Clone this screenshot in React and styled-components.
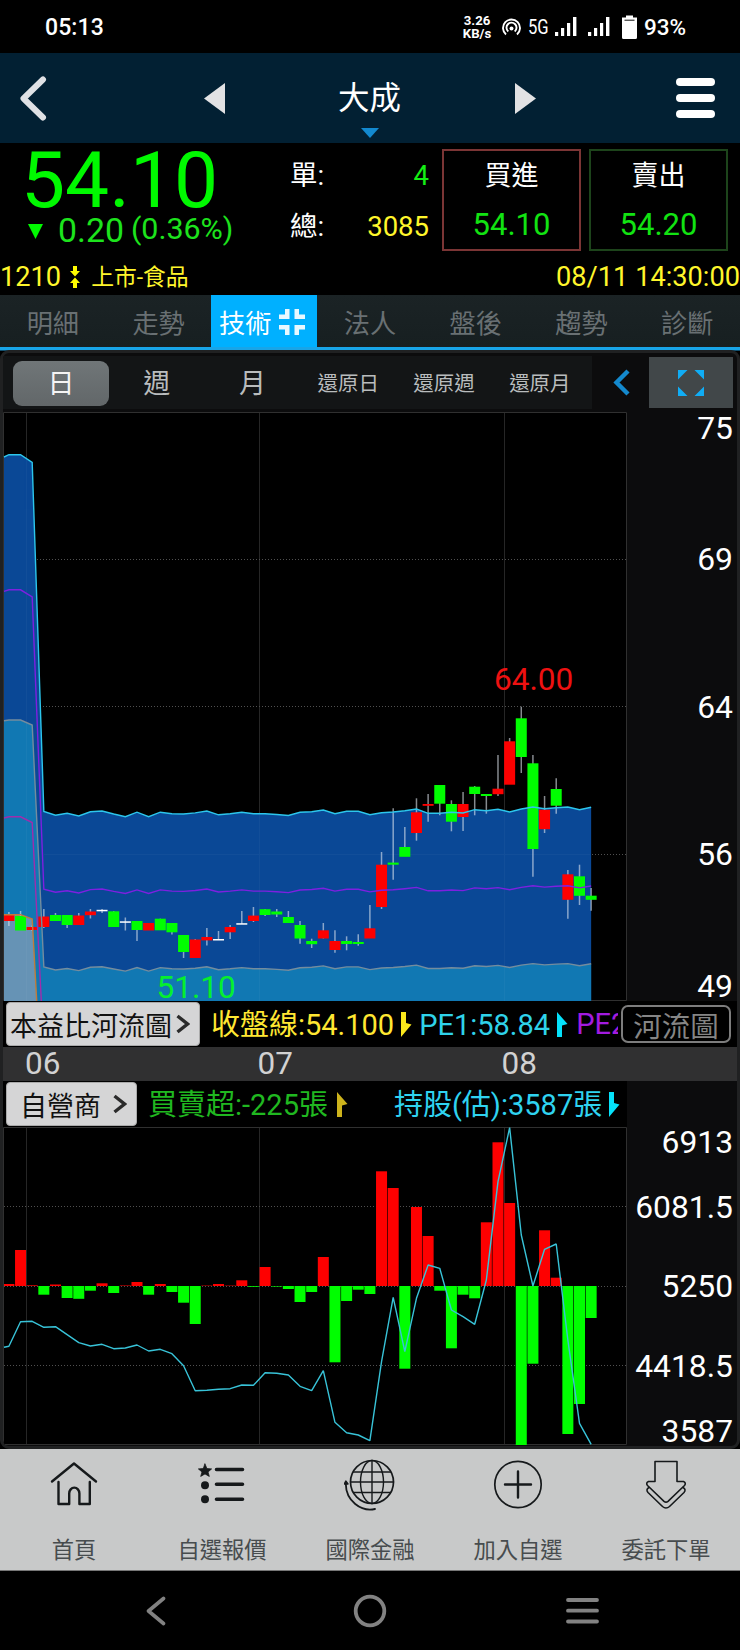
import React from 'react';
import styled, { createGlobalStyle } from 'styled-components';

const Global = createGlobalStyle`
  * { box-sizing: border-box; }
  body { margin: 0; background: #000; }
  svg { display: block; flex: none; }
`;

const Screen = styled.main`
  width: 740px;
  height: 1650px;
  overflow: hidden;
  background: #000;
  color: #fff;
  font-family: Roboto, 'Noto Sans CJK TC', sans-serif;
  display: flex;
  flex-direction: column;
  white-space: nowrap;
`;

/* ---------- status bar ---------- */
const StatusBar = styled.div`
  height: 53px;
  flex: none;
  display: flex;
  align-items: center;
  padding: 1px 54px 0 45px;
  font-size: 23px;
  font-weight: 500;
`;
const Clock = styled.span`
  margin-right: auto;
  letter-spacing: 0.1px;
`;
const Speed = styled.span`
  width: 30px;
  margin-right: 10px;
  font-size: 13.2px;
  line-height: 13px;
  font-weight: 700;
  text-align: center;
`;
const Network = styled.span`
  width: 20px;
  margin: 0 7px;
  font-size: 20px;
  font-weight: 400;
  transform: scaleX(0.83);
  transform-origin: left;
`;
const Percent = styled.span`
  width: 42px;
  margin-left: 7px;
  font-size: 22.5px;
`;

/* ---------- header ---------- */
const Header = styled.header`
  height: 90px;
  flex: none;
  background: #022033;
  display: grid;
  grid-template-columns: 184px 134px 177px 161px 39px;
  align-items: center;
  padding-left: 20px;
`;
const Title = styled.div`
  position: relative;
  font-size: 31.5px;
  line-height: 92px;
  height: 90px;
  width: 63px;
  svg { position: absolute; left: 23px; top: 75px; }
`;
const Burger = styled.div`
  display: grid;
  gap: 8px;
`;
const BurgerBar = styled.i`
  height: 8px;
  border-radius: 4px;
  background: #fff;
`;

/* ---------- quote ---------- */
const Quote = styled.section`
  height: 115px;
  flex: none;
  display: flex;
  padding: 5px 12px 0 0;
`;
const PriceBlock = styled.div`
  width: 290px;
  color: #00f900;
`;
const Price = styled.div`
  padding: 2px 0 0 21px;
  font-size: 78.5px;
  line-height: 60px;
`;
const Change = styled.div`
  display: flex;
  align-items: baseline;
  padding-left: 28px;
  margin-top: 1px;
  line-height: 40px;
  font-size: 33.8px;
  color: #1de31d;
`;
const DownMark = styled.i`
  width: 15px;
  height: 15px;
  margin-right: 15px;
  align-self: center;
  background: #00f900;
  clip-path: polygon(0 0, 100% 0, 50% 100%);
`;
const Ratio = styled.span`
  margin-left: 7px;
  font-size: 30.4px;
  position: relative;
  top: -3px;
`;
const Volumes = styled.dl`
  width: 139px;
  margin: 0 13px 0 0;
  padding-top: 2px;
  display: grid;
  grid-template-rows: 51px 51px;
`;
const Volume = styled.div`
  display: flex;
  justify-content: space-between;
  font-size: 27.5px;
  line-height: 51px;
  dt { color: #fff; }
  dd { margin: 0; color: ${p => p.$tone}; }
`;
const OrderBox = styled.button`
  width: 139px;
  height: 102px;
  margin: 1px 8px 0 0;
  padding: 0;
  flex: none;
  border: 2px solid ${p => p.$edge};
  background: transparent;
  font-family: inherit;
  color: #fff;
  font-size: 27px;
  line-height: 49px;
  text-align: center;
  & + & { margin-right: 0; }
`;
const OrderPrice = styled.div`
  color: #12e312;
  font-size: 31px;
  line-height: 48px;
`;
const InfoLine = styled.div`
  height: 37px;
  flex: none;
  display: flex;
  align-items: center;
  color: #fff62b;
  font-size: 27.2px;
  line-height: 36px;
  svg { margin: 0 11px 0 9px; }
`;
const Sector = styled.span`
  font-size: 22.8px;
  margin-right: auto;
  padding-top: 2px;
`;

/* ---------- tabs ---------- */
const Tabs = styled.nav`
  height: 55px;
  flex: none;
  display: grid;
  grid-template-columns: repeat(7, 1fr);
  background: linear-gradient(#1b2325, #171f21);
  border-bottom: 3px solid #18a5e8;
  box-shadow: 0 1px 0 #12506f;
`;
const Tab = styled.a`
  display: flex;
  align-items: center;
  justify-content: center;
  gap: 8px;
  padding: 1px ${p => (p.$active ? 4 : 0)}px 0 0;
  font-size: 26.2px;
  color: ${p => (p.$active ? '#fff' : '#697073')};
  background: ${p => (p.$active ? '#00b0ff' : 'transparent')};
`;

/* ---------- chart panel ---------- */
const Panel = styled.section`
  height: 1099px;
  flex: none;
  display: flex;
  flex-direction: column;
  border: solid #202122;
  border-width: 3px;
  border-radius: 9px;
  background: #0c0c0d;
  padding: 3px 0 0;
  overflow: hidden;
`;
const Toolbar = styled.div`
  height: 56px;
  flex: none;
  display: flex;
  align-items: flex-start;
`;
const Periods = styled.div`
  width: 589px;
  height: 53px;
  display: flex;
  align-items: center;
  padding: 1px 0 0 10px;
  background: #131516;
`;
const Period = styled.button`
  width: 95.8px;
  height: 45px;
  padding: 2px 0 0;
  border: 0;
  border-radius: 9px;
  background: ${p => (p.$active ? 'linear-gradient(#707678, #626769)' : 'transparent')};
  color: ${p => (p.$active ? '#f4f4f4' : '#b9bcbd')};
  font: ${p => (p.$small ? 20.5 : 27)}px/43px Roboto, 'Noto Sans CJK TC', sans-serif;
`;
const Collapse = styled.div`
  width: 57px;
  height: 52px;
  display: flex;
  align-items: center;
  padding-left: 21px;
`;
const Expand = styled.div`
  width: 84px;
  height: 51px;
  margin-top: 1px;
  display: flex;
  align-items: center;
  justify-content: center;
  background: #414749;
`;
const ChartRow = styled.div`
  flex: none;
  height: ${p => p.$h}px;
  display: flex;
`;
const Axis = styled.div`
  flex: 1;
  padding: 0 4px 0 0;
  text-align: right;
  font-size: 31.8px;
  line-height: 32px;
`;
const Tick = styled.div`
  margin-top: ${p => p.$gap}px;
`;
const Legend = styled.div`
  flex: none;
  height: 46px;
  width: ${p => p.$w}px;
  display: flex;
  align-items: center;
  padding-left: 3px;
  background: #000;
  font-size: 29px;
  line-height: 46px;
`;
const Picker = styled.button`
  width: ${p => p.$w}px;
  height: 44px;
  flex: none;
  padding: 6px 9px 0 ${p => p.$pad}px;
  display: flex;
  justify-content: space-between;
  align-items: center;
  border: 1px solid #aaa;
  border-radius: 4px;
  background: #d5d5d6;
  color: #111;
  font: 27px/38px Roboto, 'Noto Sans CJK TC', sans-serif;
  svg { margin-top: -7px; }
`;
const Reading = styled.span`
  flex: none;
  display: flex;
  align-items: center;
  gap: ${p => p.$space || 7}px;
  margin-left: ${p => p.$gap}px;
  padding-top: 1px;
  color: ${p => p.$tone};
  svg { margin-top: -1px; }
`;
const Cut = styled.span`
  width: 42px;
  margin-left: 8px;
  overflow: hidden;
  color: #a31be0;
`;
const RiverButton = styled.button`
  width: 110px;
  height: 38px;
  margin-left: 3px;
  padding: 0;
  border: 2px solid #7d7d7d;
  border-radius: 7px;
  background: #000;
  color: #858585;
  overflow: hidden;
  font: 28.5px/42px Roboto, 'Noto Sans CJK TC', sans-serif;
`;
const Months = styled.div`
  height: 34px;
  flex: none;
  display: grid;
  grid-template-columns: 232.5px 244px 1fr;
  padding-left: 22px;
  background: #303031;
  color: #d2d2d2;
  font-size: 31.5px;
  line-height: 34px;
`;

/* ---------- footer ---------- */
const Footer = styled.footer`
  height: 122px;
  flex: none;
  display: grid;
  grid-template-columns: repeat(5, 1fr);
  background: #c8c9c9;
  border-bottom: 1px solid #777;
`;
const FooterItem = styled.a`
  display: flex;
  flex-direction: column;
  align-items: center;
  padding-top: 8px;
  font-size: 22.3px;
  line-height: 30px;
  color: #474c4e;
  svg { margin-bottom: 22px; }
`;
const SystemNav = styled.div`
  height: 80px;
  flex: none;
  display: grid;
  grid-template-columns: 207px 213px 33px;
  align-items: center;
  padding: 0 0 0 146px;
`;

/* ---------- data ---------- */
const R = '#fe0000';
const G = '#00fe00';
const W = '#ffffff';
const cx = i => 8.9 + 11.645 * i;

// [colour, body top, body bottom, wick top, wick bottom]
const candles = [
  [R, 915, 921, 912, 926], [G, 916, 930.5, 911, 930], [R, 927, 930, 925.5, 931], [R, 916.5, 927, 909, 928],
  [G, 915, 921, 913, 921], [G, 915, 925, 915, 928], [R, 915.5, 925, 913, 925], [R, 911.5, 915.2, 909, 918.5],
  [W, 909.8, 911.3, 909, 913], [G, 911.3, 927, 911, 927], [W, 921.3, 922.8, 917.5, 930.5], [G, 921, 930, 921, 941],
  [R, 923, 930.5, 923, 930], [G, 918.7, 930.3, 918.7, 930], [G, 923, 932.3, 923, 934.5], [G, 935, 952, 935, 958],
  [R, 939.5, 958, 939, 958], [R, 937, 940.4, 928, 945.5], [W, 939, 940.5, 931, 940], [R, 927, 932.3, 925, 939],
  [W, 923.2, 924.7, 911, 924], [R, 915.6, 921, 907, 922], [G, 909.2, 915, 909, 916], [G, 911.5, 914.5, 909, 917],
  [G, 917, 923, 911, 923], [G, 925, 938.5, 921, 943.7], [G, 941, 944.2, 938.7, 948], [R, 930.3, 938.5, 923, 938.5],
  [R, 941, 950, 930.3, 952.7], [G, 941, 944, 936.3, 950.3], [G, 942, 944, 934.3, 945.7], [R, 928.3, 938.5, 905, 938],
  [R, 864.7, 907, 852, 909], [G, 862.6, 864.7, 808.3, 879.7], [G, 847, 856.8, 827, 856], [R, 812.3, 833, 798.3, 840.7],
  [R, 804, 805.8, 794, 821.7], [G, 785, 803.7, 785, 815.3], [G, 804, 821.7, 800.3, 831.3], [R, 804, 817, 792, 831],
  [G, 786.7, 794, 786, 815.3], [G, 794, 796, 794, 813.7], [R, 788.7, 794.2, 755, 796], [R, 741.3, 784.7, 738, 784],
  [G, 718.3, 757, 706.7, 773], [G, 763.3, 849, 755, 876.7], [R, 809.7, 829.2, 796, 833], [G, 789, 805.7, 778.3, 813.7],
  [R, 874.3, 899.8, 870, 918.7], [G, 876.3, 895.8, 864.7, 905], [G, 895.7, 899.8, 888, 910.7],
];

const upperTail = [
  811.4, 815.2, 813.3, 816, 811.8, 811, 814, 816.7, 812.2, 816.7, 812.2, 813.7, 814, 812.9, 811, 814.8, 813.7, 812.2,
  813.7, 813.7, 814.5, 815.5, 812.3, 811.7, 810, 813.7, 811.3, 811.3, 814.7, 812.7, 812, 810.7, 809, 813.3, 813.3,
  812.3, 813, 809.7, 810.7, 809.3, 812, 809, 807, 808.7, 807.7, 807, 809.7, 807.3,
];
const band = (start, flat, edge, base, k) =>
  [`4,${start}`, `${cx(0)},${flat}`, `${cx(1)},${flat}`, `${cx(2)},${edge}`]
    .concat(upperTail.map((y, i) => `${cx(i + 3)},${(base + (y - 811.4) * k).toFixed(1)}`))
    .join(' ');
const upper = band(457, 454.7, 462.4, 811.4, 1);
const purple = band(591.4, 589.8, 597, 889.3, 0.8);
const lower = band(720.8, 720, 725, 967, 0.78);
const magenta = `4,818 ${cx(0)},816.8 ${cx(1)},816.8 ${cx(2)},822.5 ${cx(3)},1050`;
const orange = `4,914.7 ${cx(1)},914.7 ${cx(2)},919 ${cx(3)},1130`;
const lastX = cx(50);

const barEnds = [
  1284, 1250, 1285.3, 1294.7, 1284.5, 1298, 1298.8, 1290.7, 1283.3, 1293, 1285.5, 1282, 1294.7, 1284, 1292, 1302.7,
  1324, 1285.6, 1284, 1285.6, 1280.3, 1286.8, 1267, 1286.6, 1289, 1302, 1292, 1257, 1362.3, 1301, 1289.7, 1294,
  1171.3, 1188, 1368.7, 1207, 1236, 1290.7, 1348.3, 1294.7, 1298.3, 1222.3, 1142.3, 1203, 1445, 1363.7, 1230.3,
  1277.7, 1434, 1404, 1318,
];
const holdings = [
  1346.3, 1321.7, 1321.3, 1327.3, 1326.7, 1334.7, 1342.7, 1346, 1344.3, 1348.7, 1348, 1345, 1351, 1349.3, 1353.7,
  1365.7, 1390.7, 1390.3, 1389.3, 1388.7, 1385, 1385.3, 1372.7, 1373.3, 1375, 1386.3, 1390.7, 1370.7, 1422.3, 1432.7,
  1435, 1440.7, 1361.7, 1297.3, 1351.7, 1298.3, 1265, 1268.3, 1310, 1316.7, 1324.3, 1280, 1181.7, 1127.7, 1235, 1286,
  1249.3, 1244, 1340, 1423.3, 1444.3,
];

/* ---------- drawings ---------- */
const Grid = ({ top, bottom, rows }) => (
  <g fill="none" stroke="#262626">
    {[26.5, 259.5, 504.5].map(x => <path key={x} d={`M${x} ${top}V${bottom}`} />)}
    <path stroke="#303030" d={`M3.5 ${top}H626.5V${bottom}H3.5Z`} />
    {rows.map(y => <path key={y} stroke="#505050" strokeDasharray="1 2" d={`M4 ${y}H626`} />)}
  </g>
);

const PriceChart = () => (
  <svg width="624" height="589" viewBox="3 412 624 589">
    <rect x="3" y="412" width="624" height="589" fill="#000" />
    <Grid top={412.5} bottom={1000.5} rows={[559.5, 706.5, 854.5]} />
    <polygon points={`${upper} ${lastX},1001 4,1001`} fill="#0a4896" />
    <polygon points={`${lower} ${lastX},1001 4,1001`} fill="#1178b3" />
    <polygon points={`${orange} 4,1130`} fill="#6693b5" />
    <path stroke="#fff" opacity="0.03" d="M26.5 455V1001M259.5 812V1001M504.5 812V1001M44 854.5H590" />
    {candles.map(([c, t, b, wt, wb], i) => (
      <g key={i}>
        <path d={`M${cx(i)} ${wt}V${wb}`} stroke="#dfe6ee" strokeOpacity="0.6" strokeWidth="1.5" />
        <rect x={Math.max(4, cx(i) - 5.5)} y={t} width={i ? 11 : 10.4} height={b - t} fill={c} />
      </g>
    ))}
    <g fill="none" strokeWidth="1.4">
      <polyline points={upper} stroke="#2cc6ec" />
      <polyline points={purple} stroke="#7d20e0" />
      <polyline points={lower} stroke="#748c9e" />
      <polyline points={magenta} stroke="#a02dac" />
      <polyline points={orange} stroke="#c07c3c" />
    </g>
    <text x="494" y="689.5" fontSize="31.6" fill="#ee1111">64.00</text>
    <text x="156.5" y="997.5" fontSize="31.6" fill="#06ef2e">51.10</text>
  </svg>
);

const FlowChart = () => (
  <svg width="624" height="318" viewBox="3 1127 624 318">
    <rect x="3" y="1127" width="624" height="318" fill="#000" />
    <Grid top={1127.5} bottom={1444.5} rows={[1206.5, 1286.5, 1365.5]} />
    {barEnds.map((y, i) => (
      <rect key={i} x={Math.max(4, cx(i) - 5.5)} y={Math.min(y, 1286)} width={i ? 11 : 10.4}
        height={Math.abs(y - 1286)} fill={y < 1286 ? R : G} />
    ))}
    <polyline fill="none" stroke="#38c3d8" strokeWidth="1.4" strokeLinejoin="bevel"
      points={`4,1347.3 ${holdings.map((y, i) => `${cx(i)},${y}`).join(' ')}`} />
  </svg>
);

const Fall = ({ c }) => <svg width="11" height="25"><path d="M0 0H5V11L10.5 12.5L0 25Z" fill={c} /></svg>;
const Rise = ({ c }) => <svg width="11" height="25"><path d="M0 0L10.5 12L5 13.5V25H0Z" fill={c} /></svg>;
const Signal = () => (
  <svg width="22" height="20" fill="#fff">
    <rect y="15" width="3.2" height="4" /><rect x="6" y="11" width="3.2" height="8" />
    <rect x="12" y="6" width="3.2" height="13" /><rect x="18" width="3.4" height="19" />
  </svg>
);
const PickArrow = () => (
  <svg width="14" height="20" fill="none" stroke="#2b2b2b" strokeWidth="3.4"><path d="M1.5 2L11.5 10L1.5 18" /></svg>
);

const icons = {
  home: (
    <path d="M4 24.5L26 6.5L48 24.5M10.5 25V47H21.2V36.5A4.8 5.5 0 0 1 31.4 36.5V47H41.8V25" strokeWidth="2.4" />
  ),
  list: (
    <>
      <path d="M20.5 12.5H46.5M20.5 27.3H46.5M20.5 42.3H46.5" strokeWidth="3.6" />
      <path d="M9 7L10.9 11.6L15.6 11.9L12 15L13.3 19.4L9 16.9L4.7 19.4L6 15L2.4 11.9L7.1 11.6Z"
        fill="#16191b" strokeWidth="0.8" />
      <circle cx="9" cy="28.3" r="4" fill="#16191b" stroke="none" />
      <circle cx="9" cy="42.3" r="4" fill="#16191b" stroke="none" />
    </>
  ),
  globe: (
    <g strokeWidth="1.4">
      <circle cx="28" cy="25" r="21.5" strokeWidth="1.7" />
      <ellipse cx="28" cy="25" rx="11.5" ry="21.5" />
      <path d="M28 3.5V46.5M6.5 25H49.5M9.5 15H46.5M9.5 35.5H46.5" />
      <path d="M1.8 27C2 44 17 55 31 52" strokeWidth="1.8" />
      <path d="M0.2 27L1.8 24L4 27Z" fill="#16191b" />
    </g>
  ),
  add: (
    <>
      <circle cx="26" cy="27.5" r="23.2" strokeWidth="1.7" />
      <path d="M13 27.5H39M26 14.5V40.5" strokeWidth="2.4" />
    </>
  ),
  order: (
    <g strokeWidth="1.6">
      <path d="M15 4.5H37V24.5H43.5Q46.5 26 44.5 28.5L28 44.3Q26 46 24 44.3L7.5 28.5Q5.5 26 8.5 24.5H15Z" />
      <path d="M9 30.5Q5.5 32.5 8 35.5L22.5 49.5Q26 52.5 29.5 49.5L44 35.5Q46.5 32.5 43 30.5" />
    </g>
  ),
};
const menu = [['home', '首頁'], ['list', '自選報價'], ['globe', '國際金融'], ['add', '加入自選'], ['order', '委託下單']];

export default function App() {
  return (
    <Screen>
      <Global />
      <StatusBar>
        <Clock>05:13</Clock>
        <Speed>3.26<br />KB/s</Speed>
        <svg width="19" height="18" fill="none" stroke="#fff" strokeWidth="1.9">
          <path d="M4 16.5A8.5 8.5 0 1 1 15 16.5" />
          <path d="M6.3 13.5A5 5 0 1 1 12.7 13.5" />
          <circle cx="9.5" cy="10.5" r="2" fill="#fff" stroke="none" />
        </svg>
        <Network>5G</Network>
        <Signal />
        <svg width="11" height="1" />
        <Signal />
        <svg width="12" height="1" />
        <svg width="15" height="25">
          <path d="M4 0.5H11V2.5H15V22.5Q15 24 13.5 24H1.5Q0 24 0 22.5V2.5H4Z" fill="#fff" />
          <path d="M2.5 5.2H12.5" stroke="#111" />
        </svg>
        <Percent>93%</Percent>
      </StatusBar>

      <Header>
        <svg width="27" height="45" fill="none" stroke="#dfe1e5" strokeWidth="6" strokeLinecap="round" strokeLinejoin="round">
          <path d="M23 3.5L3.5 22.5L23 41.5" />
        </svg>
        <svg width="21" height="31"><path d="M0 15.5L21 0V31Z" fill="#e2e2e4" /></svg>
        <Title>
          大成
          <svg width="18" height="10"><path d="M0 0H18L9 10Z" fill="#1389cf" /></svg>
        </Title>
        <svg width="21" height="31"><path d="M0 0L21 15.5L0 31Z" fill="#e2e2e4" /></svg>
        <Burger><BurgerBar /><BurgerBar /><BurgerBar /></Burger>
      </Header>

      <Quote>
        <PriceBlock>
          <Price>54.10</Price>
          <Change><DownMark />0.20<Ratio>(0.36%)</Ratio></Change>
        </PriceBlock>
        <Volumes>
          <Volume $tone="#14ee14"><dt>單:</dt><dd>4</dd></Volume>
          <Volume $tone="#fff62b"><dt>總:</dt><dd>3085</dd></Volume>
        </Volumes>
        <OrderBox $edge="#7b3535">買進<OrderPrice>54.10</OrderPrice></OrderBox>
        <OrderBox $edge="#1d441b">賣出<OrderPrice>54.20</OrderPrice></OrderBox>
      </Quote>
      <InfoLine>
        <span>1210</span>
        <svg width="10" height="22" fill="#fffb00">
          <path d="M3 0H7V5H10L5 10.5L0 5H3ZM3 22H7V17H10L5 11.5L0 17H3Z" />
        </svg>
        <Sector>上市-食品</Sector>
        <span>08/11 14:30:00</span>
      </InfoLine>

      <Tabs>
        <Tab>明細</Tab>
        <Tab>走勢</Tab>
        <Tab $active>
          技術
          <svg width="26" height="26" fill="#e8f8ff">
            <path d="M6 0H10.5V10H0V5.5H6ZM20 0H15.5V10H26V5.5H20ZM6 26H10.5V16H0V20.5H6ZM20 26H15.5V16H26V20.5H20Z" />
          </svg>
        </Tab>
        <Tab>法人</Tab>
        <Tab>盤後</Tab>
        <Tab>趨勢</Tab>
        <Tab>診斷</Tab>
      </Tabs>

      <Panel>
        <Toolbar>
          <Periods>
            <Period $active>日</Period>
            <Period>週</Period>
            <Period>月</Period>
            <Period $small>還原日</Period>
            <Period $small>還原週</Period>
            <Period $small>還原月</Period>
          </Periods>
          <Collapse>
            <svg width="17" height="27" fill="none" stroke="#1489cd" strokeWidth="4.4"><path d="M15 2L3.5 13.5L15 25" /></svg>
          </Collapse>
          <Expand>
            <svg width="26" height="26" fill="#10adf5">
              <path d="M0 0H9.5L0 9.5ZM26 0H16.5L26 9.5ZM0 26H9.5L0 16.5ZM26 26H16.5L26 16.5Z" />
            </svg>
          </Expand>
        </Toolbar>

        <ChartRow $h={589}>
          <PriceChart />
          <Axis>
            <Tick $gap={0}>75</Tick>
            <Tick $gap={99}>69</Tick>
            <Tick $gap={116}>64</Tick>
            <Tick $gap={115}>56</Tick>
            <Tick $gap={100}>49</Tick>
          </Axis>
        </ChartRow>
        <Legend $w={734}>
          <Picker $w={194} $pad={3}>本益比河流圖<PickArrow /></Picker>
          <Reading $gap={11} $tone="#ffe732">收盤線:54.100<Fall c="#fbe81c" /></Reading>
          <Reading $gap={7} $tone="#2fd3ea">PE1:58.84<Rise c="#05e1fa" /></Reading>
          <Cut>PE2</Cut>
          <RiverButton>河流圖</RiverButton>
        </Legend>
        <Months><span>06</span><span>07</span><span>08</span></Months>
        <Legend $w={624}>
          <Picker $w={131} $pad={13}>自營商<PickArrow /></Picker>
          <Reading $gap={11} $space={9} $tone="#20b820">買賣超:-225張<Rise c="#cdb31c" /></Reading>
          <Reading $gap={46} $tone="#2fd3f0">持股(估):3587張<Fall c="#05e1fa" /></Reading>
        </Legend>
        <ChartRow $h={318}>
          <FlowChart />
          <Axis>
            <Tick $gap={-1}>6913</Tick>
            <Tick $gap={33}>6081.5</Tick>
            <Tick $gap={47}>5250</Tick>
            <Tick $gap={48}>4418.5</Tick>
            <Tick $gap={33}>3587</Tick>
          </Axis>
        </ChartRow>
      </Panel>

      <Footer>
        {menu.map(([icon, label]) => (
          <FooterItem key={icon}>
            <svg width="52" height="56" fill="none" stroke="#16191b" strokeLinecap="round" strokeLinejoin="round">
              {icons[icon]}
            </svg>
            {label}
          </FooterItem>
        ))}
      </Footer>
      <SystemNav>
        <svg width="20" height="30" fill="none" stroke="#828282" strokeWidth="3.6" strokeLinecap="round">
          <path d="M17.5 2.5L2.5 15L17.5 27.5" strokeLinejoin="round" />
        </svg>
        <svg width="34" height="34" fill="none" stroke="#828282" strokeWidth="3.8"><circle cx="17" cy="17" r="14.3" /></svg>
        <svg width="33" height="26" stroke="#828282" strokeWidth="3.8" strokeLinecap="round">
          <path d="M2 2H31M2 12.7H31M2 23.5H31" />
        </svg>
      </SystemNav>
    </Screen>
  );
}
